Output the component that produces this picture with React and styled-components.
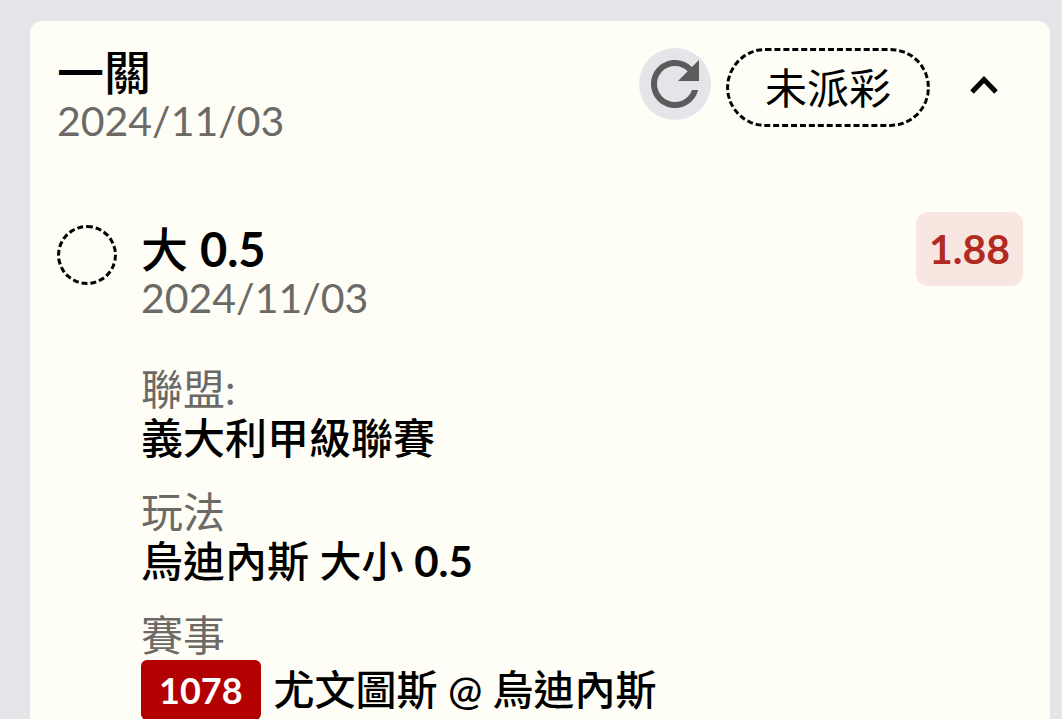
import React, { useState } from "react";
import styled, { createGlobalStyle } from "styled-components";
import { MdRefresh } from "react-icons/md";

const GlobalStyle = createGlobalStyle`
  *, *::before, *::after { box-sizing: border-box; }
  body {
    margin: 0;
    background: #e4e5e8;
    color: #000;
    font-family: Lato, "Noto Sans CJK TC", sans-serif;
    font-size: 42px;
    line-height: 50px;
  }
  h1, h2, p, dl, dd { margin: 0; }
`;

const Page = styled.main`
  padding: 21px 12px 0 30px;
`;

const Card = styled.article`
  padding: 27px;
  border-radius: 12px 12px 0 0;
  background: #fffef6;
`;

const CardHeader = styled.header`
  display: flex;
  justify-content: space-between;
  align-items: flex-start;
`;

const Actions = styled.div`
  display: flex;
  align-items: flex-start;
  gap: 15px;
`;

const Title = styled.h1`
  font-size: 47px;
  font-weight: 500;
  line-height: 48px;
`;

const SelectionTitle = styled(Title).attrs({ as: "h2" })``;

const Figure = styled.span`
  font-weight: 700;
`;

const DateText = styled.time`
  display: block;
  color: #6b6a67;
  font-size: 41px;
`;

const IconButton = styled.button`
  display: flex;
  align-items: center;
  justify-content: center;
  width: ${(p) => p.$width}px;
  height: 72px;
  padding: 0;
  border: 0;
  border-radius: 36px;
  background: ${(p) => p.$fill || "transparent"};
  color: ${(p) => p.$color};
  cursor: pointer;
`;

const Status = styled.span`
  display: flex;
  align-items: center;
  height: 79px;
  padding: 0 36px;
  border: 3px dashed #000;
  border-radius: 40px;
`;

const Leg = styled.section`
  display: flex;
  align-items: flex-start;
  gap: 24px;
  margin-top: 66px;
`;

const PendingMark = styled.span`
  flex: none;
  width: 60px;
  height: 60px;
  margin-top: 13px;
  border: 3px dashed #000;
  border-radius: 50%;
`;

const LegBody = styled.div`
  flex: 1;
  padding-top: 13px;
`;

const Odds = styled.strong`
  padding: 12px 13px;
  border-radius: 12px;
  background: #f7e7e0;
  color: #b32a22;
  font-size: 41px;
  font-weight: 700;
`;

const Details = styled.dl`
  display: flex;
  flex-direction: column;
  gap: 25px;
  margin-top: 41px;
`;

const Label = styled.dt`
  color: #6b6a67;
`;

const Value = styled.dd`
  font-weight: 500;
  line-height: 48px;
`;

const Match = styled.dd`
  display: flex;
  align-items: center;
  gap: 13px;
  font-size: 41px;
  font-weight: 500;
`;

const MatchCode = styled.span`
  padding: 5px 18px;
  border-radius: 6px;
  background: #b30000;
  color: #fff;
  font-size: 36px;
  font-weight: 700;
`;

function ChevronUp() {
  return (
    <svg width="32" height="24" viewBox="0 0 32 24" fill="none" aria-hidden="true">
      <path d="M4 20 16 7.500 28 20" stroke="currentColor" strokeWidth="5" />
    </svg>
  );
}

export default function App() {
  const [open, setOpen] = useState(true);
  return (
    <Page>
      <GlobalStyle />
      <Card>
        <CardHeader>
          <div>
            <Title>一關</Title>
            <DateText dateTime="2024-11-03">2024/11/03</DateText>
          </div>
          <Actions>
            <IconButton type="button" aria-label="重新整理" $width={72} $fill="#e4e5e8" $color="#5b5b5b">
              <MdRefresh size={72} />
            </IconButton>
            <Status>未派彩</Status>
            <IconButton
              type="button"
              aria-label="收合"
              aria-expanded={open}
              onClick={() => setOpen(!open)}
              $width={78}
              $color="#000"
            >
              <ChevronUp />
            </IconButton>
          </Actions>
        </CardHeader>
        {open && (
          <Leg>
            <PendingMark />
            <LegBody>
              <SelectionTitle>
                大 <Figure>0.5</Figure>
              </SelectionTitle>
              <DateText dateTime="2024-11-03">2024/11/03</DateText>
              <Details>
                <div>
                  <Label>聯盟:</Label>
                  <Value>義大利甲級聯賽</Value>
                </div>
                <div>
                  <Label>玩法</Label>
                  <Value>
                    烏迪內斯 大小 <Figure>0.5</Figure>
                  </Value>
                </div>
                <div>
                  <Label>賽事</Label>
                  <Match>
                    <MatchCode>1078</MatchCode>
                    <span>尤文圖斯 @ 烏迪內斯</span>
                  </Match>
                </div>
              </Details>
            </LegBody>
            <Odds>1.88</Odds>
          </Leg>
        )}
      </Card>
    </Page>
  );
}
